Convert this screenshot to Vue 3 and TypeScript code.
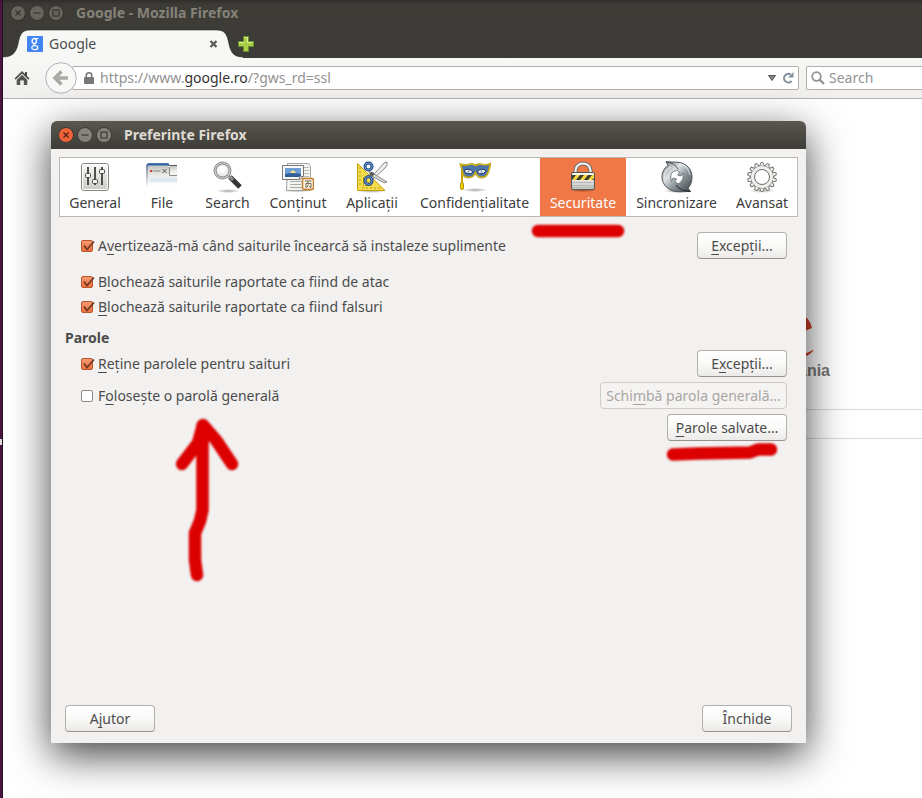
<script setup lang="ts">
import { ref } from 'vue'

interface Category {
  id: string
  label: string
}

const categories: Category[] = [
  { id: 'general', label: 'General' },
  { id: 'tabs', label: 'File' },
  { id: 'search', label: 'Search' },
  { id: 'content', label: 'Conținut' },
  { id: 'applications', label: 'Aplicații' },
  { id: 'privacy', label: 'Confidențialitate' },
  { id: 'security', label: 'Securitate' },
  { id: 'sync', label: 'Sincronizare' },
  { id: 'advanced', label: 'Avansat' },
]

const selected = ref('security')
const query = ref('')
const warnAddons = ref(true)
const blockAttack = ref(true)
const blockForgery = ref(true)
const rememberPasswords = ref(true)
const useMaster = ref(false)

const teeth = Array.from({ length: 14 }, (_, i) => (i * 360) / 14)
</script>

<template>
  <div class="desktop">
    <span class="launcher-mark"></span>
    <div class="browser">
      <header class="chrome">
        <div class="titlebar">
          <button v-for="k in ['close', 'min', 'max']" :key="k" class="wm" type="button" :aria-label="k">
            <svg viewBox="0 0 16 16" width="16" height="16">
              <circle cx="8" cy="8" r="7.5" fill="#66645d" stroke="#33322e" />
              <path v-if="k === 'close'" d="M5.5 5.5l5 5M10.500 5.500l-5 5" stroke="#363530" stroke-width="1.200" />
              <path v-else-if="k === 'min'" d="M4.500 8h7" stroke="#363530" stroke-width="1.200" />
              <rect v-else x="5" y="5" width="6" height="6" fill="none" stroke="#363530" stroke-width="1.200" />
            </svg>
          </button>
          <span class="window-title">Google - Mozilla Firefox</span>
        </div>
        <div class="tabstrip">
          <div class="tab">
            <svg class="tab-shape" viewBox="0 0 240 29" preserveAspectRatio="none">
              <path d="M0 29V28C9 28 13 24 15 15C17 5 19 1 27 1H213C222 1 224 5 226 15C228 24 231 28 240 28V29Z" fill="#f7f7f6" />
              <path d="M0 28C9 28 13 24 15 15C17 5 19 1 27 1H213C222 1 224 5 226 15C228 24 231 28 240 28" fill="none" stroke="#1f1e1b" stroke-opacity=".55" />
            </svg>
            <svg class="favicon" viewBox="0 0 16 16" width="16" height="16">
              <rect width="16" height="16" rx="1" fill="#4285f4" />
              <g fill="none" stroke="#fff">
                <ellipse cx="7.300" cy="5" rx="2.200" ry="2.500" stroke-width="1.300" />
                <path d="M8.500 2.500H11.500M8.300 7.300C6 8 6.500 9 8 9.500" stroke-width="1.200" />
                <ellipse cx="7.800" cy="11.700" rx="3" ry="2" stroke-width="1.200" />
              </g>
            </svg>
            <span class="tab-label">Google</span>
            <button class="tab-close" type="button" aria-label="Close tab">
              <svg viewBox="0 0 10 10" width="10" height="10"><path d="M1.500 2l6 6M7.500 2l-6 6" stroke="#5c5c5a" stroke-width="2.400" /></svg>
            </button>
          </div>
          <button class="new-tab" type="button" aria-label="New tab">
            <svg viewBox="0 0 18 18" width="18" height="18">
              <path d="M6.500 1.500h5v5h5v5h-5v5h-5v-5h-5v-5h5z" fill="#a8cf45" stroke="#68932a" />
              <path d="M7.500 2.500h3v5h5M2.500 8.500v-1h5" fill="none" stroke="#dff09d" />
            </svg>
          </button>
        </div>
      </header>

      <nav class="navbar">
        <button class="home" type="button" aria-label="Home">
          <svg viewBox="0 0 16 16" width="16" height="16">
            <path d="M8 1L.5 8.500l1.200 1.200L8 3.500l6.300 6.200 1.200-1.200L13 6V2h-2v2z" fill="#4b4b48" />
            <path d="M8 4.700L2.700 10v5h3.500v-4.500h3.600V15h3.500v-5z" fill="#555551" />
          </svg>
        </button>
        <button class="back" type="button" aria-label="Back">
          <svg viewBox="0 0 32 32" width="32" height="32">
            <circle cx="16" cy="16" r="15.300" fill="#f8f8f7" stroke="#aeb1b5" />
            <path d="M16.500 9.500L10 16l6.500 6.500M10.500 16H23" fill="none" stroke="#aaa9a7" stroke-width="3.600" />
          </svg>
        </button>
        <div class="urlbar">
          <svg class="lock" viewBox="0 0 10 12" width="10" height="12">
            <path d="M2.300 6V3.500a2.700 2.700 0 0 1 5.400 0V6" fill="none" stroke="#777" stroke-width="1.600" />
            <rect y="5" width="10" height="7" rx="1" fill="#777" />
          </svg>
          <div class="url" role="textbox" aria-label="Address" contenteditable="true" spellcheck="false">https://www.<span class="host">google.ro</span>/?gws_rd=ssl</div>
          <button class="mini" type="button" aria-label="History">
            <svg viewBox="0 0 8 6" width="8" height="6"><path d="M.5.5h7L4 5.500z" fill="#888" stroke="#555" /></svg>
          </button>
          <button class="mini" type="button" aria-label="Reload">
            <svg viewBox="0 0 12 12" width="12" height="12">
              <path d="M8.600 2.500A4.300 4.300 0 1 0 9.600 9" fill="none" stroke="#8090a0" stroke-width="2" />
              <path d="M11.500 0v5.500H6z" fill="#8090a0" />
            </svg>
          </button>
        </div>
        <div class="searchbar">
          <svg viewBox="0 0 14 14" width="14" height="14">
            <circle cx="5.500" cy="5.500" r="4.300" fill="none" stroke="#929290" stroke-width="1.800" />
            <path d="M8.500 8.500l4.500 4.500" stroke="#929290" stroke-width="2.400" />
          </svg>
          <input v-model="query" type="text" placeholder="Search" aria-label="Search" />
        </div>
      </nav>

      <main class="page">
        <div class="brand">
          <svg viewBox="0 0 46 50" width="46" height="50" aria-hidden="true">
            <path d="M36 5C30 1 20 4 16 11C7 23 10 46 25 47C33 48 41 45 45 40Q46 38 43 40C38 43 34 43 29 41C22 39 18 34 17 28L44 17C43 12 40 7 36 5ZM17 23C16 14 23 7 29 12C31 14 32 17 32 18Z" fill="#d8402c" />
          </svg>
          <span class="country">România</span>
        </div>
        <div class="query-line"></div>
      </main>
    </div>

    <section class="dialog" role="dialog" aria-label="Preferințe Firefox">
      <div class="dialog-title">
        <button v-for="k in ['close', 'min', 'max']" :key="k" class="wm" type="button" :aria-label="k">
          <svg viewBox="0 0 16 16" width="16" height="16">
            <circle cx="8" cy="8" r="7.500" :fill="k === 'close' ? '#ed6239' : '#85837a'" stroke="#3b3a35" />
            <path v-if="k === 'close'" d="M5.500 5.500l5 5M10.500 5.500l-5 5" stroke="#4b2415" stroke-width="1.200" />
            <path v-else-if="k === 'min'" d="M4.500 8h7" stroke="#3b3a35" stroke-width="1.200" />
            <rect v-else x="5" y="5" width="6" height="6" fill="none" stroke="#3b3a35" stroke-width="1.200" />
          </svg>
        </button>
        <h1>Preferințe Firefox</h1>
      </div>

      <div class="dialog-body">
        <div class="categories">
          <button
            v-for="c in categories"
            :key="c.id"
            type="button"
            class="category"
            :class="{ active: c.id === selected }"
            @click="selected = c.id"
          >
            <svg viewBox="0 0 32 32" width="32" height="32" aria-hidden="true">
              <defs>
                <linearGradient id="metal" x1="0" y1="0" x2="0" y2="1">
                  <stop offset="0" stop-color="#fafaf9" />
                  <stop offset="1" stop-color="#c9cac6" />
                </linearGradient>
                <linearGradient id="steel" x1="0" y1="0" x2="1" y2="1">
                  <stop offset="0" stop-color="#6d767a" />
                  <stop offset=".35" stop-color="#dfe3e5" />
                  <stop offset=".6" stop-color="#8b9498" />
                  <stop offset="1" stop-color="#3c4245" />
                </linearGradient>
                <linearGradient id="fade" x1="0" y1="0" x2="0" y2="1">
                  <stop offset="0" stop-color="#bfc0be" />
                  <stop offset=".5" stop-color="#ececea" />
                  <stop offset="1" stop-color="#fff" />
                </linearGradient>
                <linearGradient id="frame" x1="0" y1="0" x2="0" y2="1">
                  <stop offset="0" stop-color="#2f5c9b" />
                  <stop offset=".3" stop-color="#8a9099" />
                  <stop offset="1" stop-color="#fff" />
                </linearGradient>
                <radialGradient id="shade">
                  <stop offset="0" stop-color="#000" stop-opacity=".35" />
                  <stop offset="1" stop-color="#000" stop-opacity="0" />
                </radialGradient>
              </defs>

              <g v-if="c.id === 'general'">
                <rect x="2.500" y="2.500" width="27" height="27" rx="2.500" fill="url(#metal)" stroke="#85877f" />
                <rect x="3.500" y="3.500" width="25" height="25" rx="1.500" fill="none" stroke="#fff" />
                <path d="M9 6v18M16 6v18M23 6v18" stroke="#4d504b" stroke-width="2" />
                <g fill="#f3f3f1" stroke="#444743">
                  <rect x="6.500" y="12.500" width="5" height="4" rx="1" />
                  <rect x="13.500" y="18.500" width="5" height="4" rx="1" />
                  <rect x="20.500" y="8.500" width="5" height="4" rx="1" />
                </g>
              </g>

              <g v-else-if="c.id === 'tabs'">
                <rect x="24" y="4.500" width="7" height="11" fill="url(#fade)" />
                <path d="M24 4.500h7" stroke="#555" />
                <path d="M1 27V5q0-2 2-2h18q2 0 2 2v10h8v12z" fill="url(#fade)" />
                <path d="M1 27V5q0-2 2-2h18q2 0 2 2" fill="none" stroke="url(#frame)" stroke-width="1.500" />
                <path d="M2 3.500h20.500" stroke="#3465a4" stroke-width="2" />
                <path d="M4 17h27v5H4z" fill="#dde8f5" />
                <path d="M4 21h27v7H4z" fill="#fff" fill-opacity=".7" />
                <path d="M6.500 10h8" stroke="#8a8c88" />
                <rect x="4" y="9" width="2" height="2" fill="#d23b3b" />
                <path d="M16.500 8l4 4M20.500 8l-4 4" stroke="#555" />
                <path d="M23.500 6v8.500H31" fill="none" stroke="#888a85" />
              </g>

              <g v-else-if="c.id === 'search'">
                <ellipse cx="16" cy="30" rx="12" ry="2" fill="url(#shade)" />
                <path d="M18 16l10 10" stroke="#343635" stroke-width="5" />
                <path d="M17 15l4 4" stroke="#90928f" stroke-width="3" />
                <circle cx="10.500" cy="9.500" r="7.500" fill="#eef0ef" stroke="#868985" stroke-width="3" />
                <circle cx="10.500" cy="9.500" r="7.500" fill="none" stroke="#cfd1ce" stroke-width="1.200" />
                <path d="M6 10q0-5 5-5l4 2-4 5z" fill="#fff" />
              </g>

              <g v-else-if="c.id === 'content'">
                <ellipse cx="15" cy="29.500" rx="14" ry="2" fill="url(#shade)" />
                <path d="M5.500 2.500h21l2 3v24h-24z" fill="#f3f3f1" stroke="#a1a39e" />
                <path d="M8 20.500h12M8 23.500h11M8 26.500h12" stroke="#a8aaa5" />
                <path d="M22 6.500h5M22 9.500h5M22 12.500h5M22 15.500h5" stroke="#b8bab5" />
                <path d="M.5 4.500h21v11l-4 3H.5z" fill="#f9f9f8" stroke="#777974" />
                <path d="M3 7h16v9H3z" fill="#6f9dd4" />
                <circle cx="11" cy="12" r="2.500" fill="#ffe58a" />
                <path d="M3 13q8-2 16 0v3H3z" fill="#2f5f9c" />
                <path d="M17.500 18.500v-3h4z" fill="#fff" stroke="#888" />
                <rect x="20.500" y="17.500" width="11" height="11" rx="1.500" fill="#f6eedf" stroke="#cc812c" stroke-width="1.500" />
                <path d="M23 20h6.500M26 20v2M24 22.500h5v3.500M24 22.500V26M26.300 23.500q0 2.500-2.800 3.500M27 25.500l2.500 1.500" fill="none" stroke="#5a4a35" stroke-width=".8" />
              </g>

              <g v-else-if="c.id === 'applications'">
                <ellipse cx="16" cy="30" rx="15" ry="2" fill="url(#shade)" />
                <path d="M1.500 2.500L29 29.500H1.500z" fill="#f5dc4c" stroke="#c5a000" />
                <path d="M7.500 16.500l8 8h-8z" fill="#fff" stroke="#c5a000" />
                <path d="M3 7h2M3 11h2M3 15h2M3 19h2M3 23h2M7 28v-2M11 28v-2M15 28v-2M19 28v-2M23 28v-2" stroke="#b99b13" />
                <path d="M14 18L28 2l3-1q1 4-2 6L16 19z" fill="#eeeeec" stroke="#888a85" />
                <path d="M13 10l18 11-3 .8L14 14z" fill="#d8dad7" stroke="#888a85" />
                <g fill="none" stroke="#204a87" stroke-width="3">
                  <circle cx="12.500" cy="5.500" r="3.500" />
                  <ellipse cx="12.500" cy="19.500" rx="3.500" ry="4" />
                </g>
                <g fill="none" stroke="#729fcf">
                  <circle cx="12.500" cy="5.500" r="3.500" />
                  <ellipse cx="12.500" cy="19.500" rx="3.500" ry="4" />
                </g>
                <circle cx="16" cy="13" r="2" fill="#555753" />
              </g>

              <g v-else-if="c.id === 'privacy'">
                <ellipse cx="16" cy="29" rx="13" ry="2" fill="url(#shade)" />
                <path d="M3 6v20" stroke="#c4a000" stroke-width="2" />
                <rect x="1.500" y="21.500" width="3" height="7" rx="1.500" fill="#edd400" stroke="#b39106" />
                <path d="M1.500 3.500q5 1 8 0 4-1 7 1 3-2 7-1 4 1 8-1-1 4-2 8-2 6-7 6-4 0-6-5-2 5-7 5-5 0-6-5-.5-4-2-8z" fill="#4d76ad" stroke="#a78b00" stroke-width="1.800" />
                <path d="M1.500 3.500q5 1 8 0 4-1 7 1 3-2 7-1 4 1 8-1-1 4-2 8-2 6-7 6-4 0-6-5-2 5-7 5-5 0-6-5-.5-4-2-8z" fill="none" stroke="#f0d83c" stroke-width=".7" />
                <path d="M5 10q4-4 9 1-4 4-9-1zM18 11q5-5 9-1-4 5-9 1z" fill="#fff" stroke="#1e3660" />
                <circle cx="9.500" cy="10.500" r="1" fill="#607da5" />
                <circle cx="22.500" cy="10.500" r="1" fill="#607da5" />
              </g>

              <g v-else-if="c.id === 'security'">
                <ellipse cx="16" cy="29" rx="14" ry="2.500" fill="url(#shade)" />
                <path d="M8.500 13V9.500a7.500 7 0 0 1 15 0V13" fill="none" stroke="#6b6d69" stroke-width="4" />
                <path d="M8.500 13V9.500a7.500 7 0 0 1 15 0V13" fill="none" stroke="#f3f4f2" stroke-width="2.200" />
                <rect x="4.500" y="11.500" width="23" height="17" rx="1.500" fill="url(#metal)" stroke="#555753" />
                <path d="M5 14h22v5H5z" fill="#3a3a2f" />
                <path d="M5 19l4-5h4l-4 5zM13 19l4-5h4l-4 5zM21 19l4-5h2v3l-2 2z" fill="#f3d73b" />
                <path d="M5 21.500h22M5 24.500h22M5 26.500h22" stroke="#b3b5b1" />
              </g>

              <g v-else-if="c.id === 'sync'">
                <ellipse cx="16" cy="30" rx="14" ry="2" fill="url(#shade)" />
                <path d="M5 .8L16 1.200C25 1.500 31 8 31 16C31 21 29.500 24.500 27 27L29.500 30.500L18 30.800C8 30.800 1 24 1 16C1 11 3 7 7 4.500Z" fill="url(#steel)" stroke="#4d5458" />
                <path d="M16 9L18.500 12L16.500 14L20 15L22 12Q23 18 20 21L17 23L14 20.500L15.500 18L12 17L10.500 20.500Q8.500 14 11.500 11Z" fill="#fff" stroke="#5d6468" stroke-width=".8" />
                <path d="M5 .8Q14 2 17 8" fill="none" stroke="#4d5458" />
                <path d="M29.500 30.500Q19 30 15 24" fill="none" stroke="#24292b" />
                <path d="M3 17q0-8 7-11M18 3q9 1 11 11" fill="none" stroke="#fff" stroke-opacity=".6" stroke-width="1.200" />
              </g>

              <g v-else>
                <ellipse cx="16" cy="29.500" rx="13" ry="2.500" fill="url(#shade)" />
                <path v-for="t in teeth" :key="t" d="M13.500 5.500L15 1.500h2l1.500 4" fill="#f1f1ef" stroke="#777974" :transform="`rotate(${t} 16 16)`" />
                <circle cx="16" cy="16" r="9.200" fill="none" stroke="#777974" stroke-width="4.500" />
                <circle cx="16" cy="16" r="9.200" fill="none" stroke="#efefed" stroke-width="3.600" />
                <circle cx="16" cy="16" r="7.500" fill="#fff" stroke="#6c6e6a" />
              </g>
            </svg>
            <span>{{ c.label }}</span>
          </button>
        </div>

        <div class="pane">
          <div class="row">
            <label class="check">
              <span class="box"><input v-model="warnAddons" type="checkbox" /><svg v-if="warnAddons" viewBox="0 0 14 13" width="14" height="13"><path d="M3 5.500L6 9.500L13 1.500" /></svg></span>
              <span>A<u>v</u>ertizează-mă când saiturile încearcă să instaleze suplimente</span>
            </label>
            <button class="btn medium" type="button"><span><u>E</u>xcepții...</span></button>
          </div>
          <div class="stack">
            <label class="check">
              <span class="box"><input v-model="blockAttack" type="checkbox" /><svg v-if="blockAttack" viewBox="0 0 14 13" width="14" height="13"><path d="M3 5.500L6 9.500L13 1.500" /></svg></span>
              <span>B<u>l</u>ochează saiturile raportate ca fiind de atac</span>
            </label>
            <label class="check">
              <span class="box"><input v-model="blockForgery" type="checkbox" /><svg v-if="blockForgery" viewBox="0 0 14 13" width="14" height="13"><path d="M3 5.500L6 9.500L13 1.500" /></svg></span>
              <span><u>B</u>lochează saiturile raportate ca fiind falsuri</span>
            </label>
          </div>
          <h2>Parole</h2>
          <div class="rows">
            <div class="row">
              <label class="check">
                <span class="box"><input v-model="rememberPasswords" type="checkbox" /><svg v-if="rememberPasswords" viewBox="0 0 14 13" width="14" height="13"><path d="M3 5.500L6 9.500L13 1.500" /></svg></span>
                <span><u>R</u>eține parolele pentru saituri</span>
              </label>
              <button class="btn medium" type="button"><span>E<u>x</u>cepții...</span></button>
            </div>
            <div class="row">
              <label class="check">
                <span class="box"><input v-model="useMaster" type="checkbox" /><svg v-if="useMaster" viewBox="0 0 14 13" width="14" height="13"><path d="M3 5.500L6 9.500L13 1.500" /></svg></span>
                <span>F<u>o</u>losește o parolă generală</span>
              </label>
              <button class="btn wide" type="button" :disabled="!useMaster"><span>Schi<u>m</u>bă parola generală...</span></button>
            </div>
            <div class="row end">
              <button class="btn saved" type="button"><span><u>P</u>arole salvate…</span></button>
            </div>
          </div>
        </div>

        <footer class="actions">
          <button class="btn medium" type="button"><span>A<u>j</u>utor</span></button>
          <button class="btn medium" type="button"><span>Închide</span></button>
        </footer>
      </div>
    </section>

    <svg class="marker" viewBox="0 0 922 798" width="922" height="798" aria-hidden="true">
      <defs>
        <filter id="soft" x="0" y="0" width="922" height="798" filterUnits="userSpaceOnUse">
          <feGaussianBlur stdDeviation="0.900" />
        </filter>
      </defs>
      <g fill="none" stroke="#dc0000" stroke-width="12.500" stroke-linecap="round" stroke-linejoin="round" filter="url(#soft)">
        <path d="M538 231H618" />
        <path d="M673 454.500L698 453.500L750 452.500L758 449.500L771 449.500" />
        <path d="M202.500 426V510L200 521L195 533V560L197 575" />
        <path d="M182 464L198 443L203 425L216 440L232 464" />
      </g>
    </svg>
  </div>
</template>

<style>
body {
  background: #4a1540;
}
</style>

<style scoped>
* {
  box-sizing: border-box;
}
button {
  border: 0;
  padding: 0;
  background: none;
  font: inherit;
  color: inherit;
}
svg {
  display: block;
  flex: none;
}
.desktop {
  position: relative;
  min-height: 100vh;
  overflow: hidden;
  padding-left: 3px;
  background: linear-gradient(90deg, #4a1540 2px, #24101f 2px);
  font: 14px/20px "Noto Sans", "Open Sans", sans-serif;
  color: #4c4c4c;
}
.launcher-mark {
  position: absolute;
  left: 0;
  top: 439px;
  width: 2px;
  height: 6px;
  background: #ddd;
}
.browser {
  min-height: 100vh;
  display: flex;
  flex-direction: column;
  background: #fff;
}
.chrome {
  background: linear-gradient(#2f2e2b, #3d3c37 5px, #3c3b37);
}
.titlebar {
  display: flex;
  align-items: center;
  gap: 3px;
  height: 26px;
  padding-left: 7px;
}
.window-title {
  padding-left: 9px;
  font-weight: 700;
  color: #858278;
}
.tabstrip {
  display: flex;
  align-items: center;
  height: 32px;
  padding-top: 3px;
}
.tab {
  position: relative;
  display: flex;
  align-items: center;
  width: 240px;
  height: 29px;
  padding: 0 24px;
}
.tab-shape {
  position: absolute;
  inset: 0;
  width: 100%;
  height: 100%;
}
.favicon,
.tab-label,
.tab-close {
  position: relative;
}
.tab-label {
  flex: 1;
  padding-left: 6px;
}
.new-tab {
  position: relative;
  margin-left: -6px;
}
.navbar {
  display: flex;
  align-items: center;
  height: 41px;
  border-bottom: 1px solid #b6b1a9;
  background: linear-gradient(#f7f7f6, #f0efed);
}
.home {
  margin-left: 11px;
}
.back {
  position: relative;
  margin-left: 15px;
}
.urlbar {
  flex: 1;
  display: flex;
  align-items: center;
  gap: 6px;
  height: 24px;
  margin-left: -5px;
  padding: 0 4px 0 11px;
  border: 1px solid #b4b0a8;
  border-radius: 2px;
  background: #fff;
}
.lock {
  flex: none;
}
.url {
  flex: 1;
  min-width: 0;
  overflow: hidden;
  white-space: nowrap;
  outline: 0;
  color: #929292;
}
.host {
  color: #333;
}
.searchbar {
  display: flex;
  align-items: center;
  gap: 4px;
  width: 116px;
  height: 24px;
  margin-left: 7px;
  padding-left: 4px;
  border: 1px solid #b4b0a8;
  border-right: 0;
  border-radius: 2px 0 0 2px;
  background: #fff;
}
.searchbar input {
  width: 100%;
  min-width: 0;
  padding: 0;
  border: 0;
  outline: 0;
  background: none;
  font: inherit;
}
.searchbar input::placeholder {
  color: #929292;
  opacity: 1;
}
.page {
  flex: 1;
  padding: 212px 0 0 765px;
}
.brand {
  display: flex;
  flex-direction: column;
  width: 62px;
}
.country {
  align-self: flex-end;
  font: bold 16px/20px "Liberation Sans", sans-serif;
  color: #777;
}
.query-line {
  height: 30px;
  margin-top: 28px;
  border: solid #d9d9d9;
  border-width: 1px 0;
}
.dialog {
  position: absolute;
  top: 121px;
  left: 51px;
  right: 116px;
  display: flex;
  flex-direction: column;
  min-height: calc(100vh - 176px);
  border-radius: 7px 7px 0 0;
  background: #f2f1f0;
  box-shadow: 0 12px 40px rgba(0, 0, 0, 0.75);
}
.dialog-title {
  display: flex;
  align-items: center;
  gap: 3px;
  height: 28px;
  padding-left: 7px;
  border-radius: 6px 6px 0 0;
  background: linear-gradient(#59574e, #3d3c38);
}
.dialog-title h1 {
  margin: 0;
  padding-left: 9px;
  font-size: 14px;
  line-height: 20px;
  color: #dfdbd2;
}
.dialog-body {
  flex: 1;
  display: flex;
  flex-direction: column;
  padding: 8px 8px 11px;
}
.categories {
  display: grid;
  grid-template-columns: 70fr 64fr 67fr 74fr 74fr 131fr 86fr 101fr 70fr;
  height: 60px;
  border: 1px solid #bab6b0;
  background: #fff;
}
.category {
  display: flex;
  flex-direction: column;
  align-items: center;
  padding-top: 3px;
  color: #3c3c3c;
  white-space: nowrap;
}
.category.active {
  background: #f07746;
  color: #fff;
}
.pane {
  flex: 1;
  padding: 15px 11px 0 22px;
}
.row {
  display: flex;
  align-items: center;
  justify-content: space-between;
  min-height: 27px;
}
.row.end {
  justify-content: flex-end;
}
.rows {
  display: grid;
  gap: 5px;
}
.stack {
  display: grid;
  gap: 5px;
  padding: 13px 0 11px;
}
.pane h2 {
  margin: 0 0 2px -16px;
  font-size: 14px;
  line-height: 20px;
}
.check {
  display: flex;
  align-items: center;
  gap: 5px;
}
.box {
  position: relative;
  width: 12px;
  height: 12px;
}
.box input {
  display: block;
  appearance: none;
  width: 12px;
  height: 12px;
  margin: 0;
  border: 1px solid #8f8c86;
  border-radius: 2px;
  background: #fff;
}
.box input:checked {
  border-color: #b8552d;
  background: linear-gradient(#f49a72, #ee6f3f);
}
.box svg {
  position: absolute;
  left: 0;
  top: 0;
  fill: none;
  stroke: #6b3722;
  stroke-width: 1.700;
  pointer-events: none;
}
u {
  text-decoration-thickness: 1px;
  text-underline-offset: 3px;
  text-decoration-skip-ink: none;
}
.btn {
  display: flex;
  align-items: center;
  justify-content: center;
  height: 27px;
  border: 1px solid #b3b0ab;
  border-bottom-color: #96938e;
  border-radius: 4px;
  background: linear-gradient(#fff, #f9f9f8 50%, #ebeae8);
  white-space: nowrap;
}
.btn.medium {
  width: 90px;
}
.btn.wide {
  width: 187px;
}
.btn.saved {
  width: 120px;
}
.btn:disabled {
  border-color: #cfccc8;
  background: #f4f3f2;
  color: #a9a6a2;
}
.actions {
  display: flex;
  justify-content: space-between;
  padding: 0 6px;
}
.marker {
  position: absolute;
  left: 0;
  top: 0;
  pointer-events: none;
}
</style>
